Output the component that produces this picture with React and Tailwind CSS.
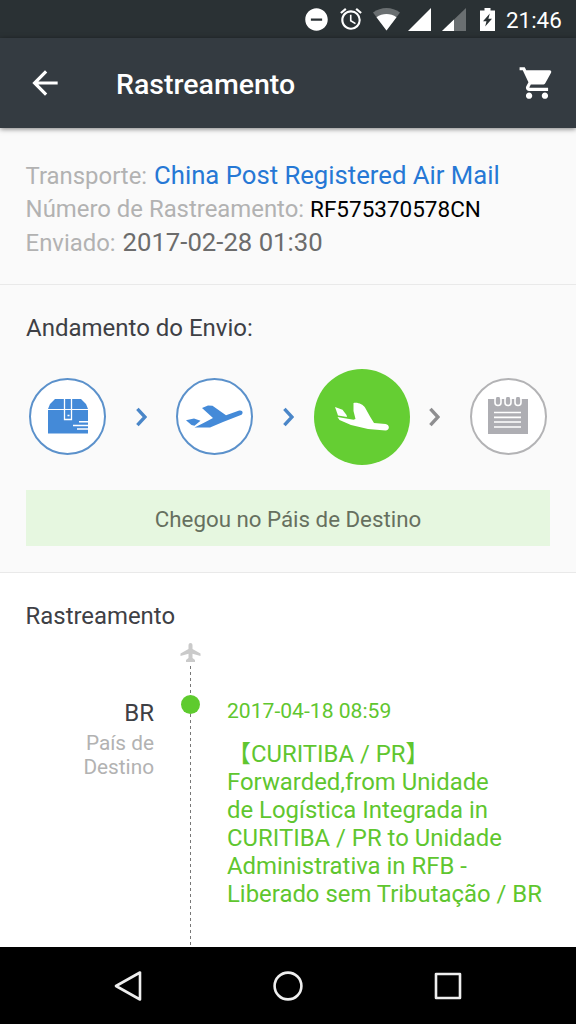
import React from 'react';
import { MdAlarm, MdArrowBack, MdDoNotDisturbOn, MdShoppingCart } from 'react-icons/md';

function StatusBar() {
  return (
    <div className="flex h-[38px] shrink-0 items-center bg-[#2a3134] pl-[303px] text-white">
      <MdDoNotDisturbOn className="h-[27px] w-[27px] shrink-0" />
      <MdAlarm className="ml-2 h-[26px] w-[26px] shrink-0" />
      <svg className="ml-[9px] h-[23px] w-[27px] shrink-0" viewBox="0 0 27 23">
        <path d="M0 4.5C8-1.5 19-1.5 27 4.5L13.5 22.5z" fill="#6a6f71" />
        <path d="M3.5 9.3C9.5 5 17.5 5 23.5 9.3L13.5 22.5z" fill="#fff" />
      </svg>
      <svg className="ml-[8px] h-[23px] w-[23px] shrink-0" viewBox="0 0 23 23">
        <path d="M0 23L23 0v23z" fill="#fff" />
      </svg>
      <svg className="ml-[11px] h-[23px] w-[24px] shrink-0" viewBox="0 0 24 23">
        <path d="M0 23L24 0v23z" fill="#6a6f71" />
        <path d="M0 23L12 11.5V23z" fill="#fff" />
      </svg>
      <svg className="ml-[14px] h-[23px] w-[15px] shrink-0" viewBox="0 0 15 23">
        <path d="M4.5 0h6v2.5H15V23H0V2.5h4.5z" fill="#fff" />
        <path d="M9.8 5.5L3 13.2h3.5L5.2 18.5l6.8-7.7H8.4z" fill="#2a3134" />
      </svg>
      <span className="ml-[11px] mt-0.5 text-[22.4px] leading-none">21:46</span>
    </div>
  );
}

function AppBar() {
  return (
    <header className="relative flex h-[90px] shrink-0 items-center bg-[#343b41] pl-[26px] pr-[20px] text-white shadow-[0_1px_5px_rgba(0,0,0,0.5)]">
      <MdArrowBack className="h-[38px] w-[38px]" />
      <h1 className="ml-[52px] mt-1 flex-1 text-[28.5px] font-medium leading-none">Rastreamento</h1>
      <MdShoppingCart className="h-[38px] w-[38px]" />
    </header>
  );
}

function Chevron({ className }) {
  return (
    <svg className={`h-5 w-[11px] shrink-0 ${className}`} viewBox="0 0 11 20" fill="none" stroke="currentColor" strokeWidth="3.4">
      <path d="M1.4 1.8L9 10l-7.6 8.2" />
    </svg>
  );
}

function BoxIcon() {
  return (
    <svg className="h-[35px] w-[40px]" viewBox="0 0 40 35">
      <path d="M7 0h26l5 5 2 5H0l2-5zM0 11h40v23.5H0z" fill="#448ad8" />
      <path d="M16.5 0v20.5h7V0" fill="none" stroke="#fff" strokeWidth="1.3" />
      <path d="M19.5 16.5h2M31 22.8h9M25 26.5h15M29 30h11" fill="none" stroke="#fff" strokeWidth="1.4" />
    </svg>
  );
}

function TakeoffIcon() {
  return (
    <svg className="h-[24px] w-[58px]" viewBox="0 0 58 24" fill="#448ad8">
      <path d="M0 15.2l8-1.7 6.5 2.2-6 5-3-.7z" />
      <path d="M16 3l6-2.5 4.5.3L40 10.3l12.5-4.5c4.5-1.3 5 2.5 3 4L37 17l-13 5.5H8.5l9-4.5 9.5-5z" />
    </svg>
  );
}

function LandingIcon() {
  return (
    <svg className="h-[30px] w-[56px]" viewBox="0 0 56 30" fill="#fff">
      <path d="M1 5l7.500 2.800 4 5.200.5 2L4 13.500z" />
      <path d="M19.500 1c4.500-1 9.500 1.500 11.500 4.500l5 9 4 6.500 11.500 1c4.500.8 4.500 6.200 0 6.500L34 27l-17-4-11.500-5-2-3 16 2.800 2-.8-2-8z" />
    </svg>
  );
}

function NotepadIcon() {
  return (
    <svg className="-mt-[3px] h-[38px] w-[40px]" viewBox="0 0 40 38">
      <path d="M0 3h40v35H0z" fill="#aeaeb3" />
      <path d="M6 16.5h27M6 21.3h27M6 26h27M6 31h27" stroke="#fff" strokeWidth="1.7" />
      <g fill="#aeaeb3" stroke="#fff" strokeWidth="1.6">
        <rect x="7" y=".5" width="6" height="9" rx="3" />
        <rect x="17" y=".5" width="6" height="9" rx="3" />
        <rect x="27" y=".5" width="6" height="9" rx="3" />
      </g>
      <path d="M10 1v6M20 1v6M30 1v6" stroke="#aeaeb3" strokeWidth="3" />
    </svg>
  );
}

function Step({ className, children }) {
  return (
    <div className={`-mt-px flex h-[77px] w-[77px] shrink-0 items-center justify-center rounded-full border-2 bg-white ${className}`}>
      {children}
    </div>
  );
}

function ShippingInfo() {
  return (
    <section className="h-[157px] shrink-0 whitespace-nowrap border-b border-[#e9e9e9] pl-[25.6px] pt-[30.6px] text-[23.9px] leading-[33.4px] text-[#b2b2b2]">
      <p>
        Transporte: <span className="ml-px text-[25.7px] text-[#2678d5]">China Post Registered Air Mail</span>
      </p>
      <p>
        Número de Rastreamento: <span className="text-[22.5px] text-black">RF575370578CN</span>
      </p>
      <p>
        Enviado: <span className="ml-px text-[25.7px] text-[#6c6c6c]">2017-02-28 01:30</span>
      </p>
    </section>
  );
}

function Progress() {
  return (
    <section className="h-[288px] shrink-0 border-b border-[#e9e9e9] px-[26px] pt-[29px]">
      <h2 className="text-[24px] leading-[28px] text-[#3e4045]">Andamento do Envio:</h2>
      <div className="mt-[27px] flex h-[96px] items-center justify-between px-[3px]">
        <Step className="border-[#5b91cb]"><BoxIcon /></Step>
        <Chevron className="text-[#4a86c8]" />
        <Step className="border-[#5b91cb]"><TakeoffIcon /></Step>
        <Chevron className="text-[#4a86c8]" />
        <div className="-mx-[10px] flex h-[96px] w-[96px] shrink-0 items-center justify-center rounded-full bg-[#65ce33]">
          <LandingIcon />
        </div>
        <Chevron className="text-[#8e8e90]" />
        <Step className="border-[#b3b3b5]"><NotepadIcon /></Step>
      </div>
      <div className="mt-[25px] flex h-[56px] items-center justify-center bg-[#e6f7e0] pt-[3px] text-[22.3px] text-[#66705f]">
        Chegou no Páis de Destino
      </div>
    </section>
  );
}

const dashes = 'w-px bg-[repeating-linear-gradient(to_bottom,#777_0_3px,transparent_3px_6px)]';

function Timeline() {
  return (
    <section className="flex min-h-0 flex-1 flex-col bg-white pt-[29px]">
      <h2 className="pl-[25.6px] text-[23.9px] leading-[28px] text-[#3e4045]">Rastreamento</h2>
      <div className="flex min-h-0 flex-1 pt-[12px]">
        <div className="w-[154px] pt-[57px] text-right">
          <p className="text-[24px] leading-[28px] text-[#3e4045]">BR</p>
          <p className="mt-[4px] text-[20.8px] leading-[24px] text-[#b2b2b2]">País de<br />Destino</p>
        </div>
        <div className="ml-[25px] flex w-[23px] shrink-0 flex-col items-center">
          <svg className="mt-[1px] h-[19px] w-[21px] shrink-0" viewBox="0 0 20 19" fill="#cacaca">
            <path d="M8 2.5c0-3.2 4-3.2 4 0V6l8 4.5V13l-8-2.2V15l2.5 2v2h-9v-2L8 15v-4.200L0 13v-2.5L8 6z" />
          </svg>
          <div className={`mt-[4px] h-[29px] shrink-0 ${dashes}`} />
          <div className="h-[19px] w-[19px] shrink-0 rounded-full bg-[#5ecb2e]" />
          <div className={`flex-1 ${dashes}`} />
        </div>
        <div className="ml-[25px] whitespace-nowrap pt-[55px] text-[#5fc62f]">
          <p className="text-[21.1px] leading-[28px]">2017-04-18 08:59</p>
          <p className="mt-[15px] text-[23.9px] leading-[28px]">
            【CURITIBA / PR】<br />
            Forwarded,from Unidade<br />
            de Logística Integrada in<br />
            CURITIBA / PR to Unidade<br />
            Administrativa in RFB -<br />
            Liberado sem Tributação / BR
          </p>
        </div>
      </div>
    </section>
  );
}

function NavBar() {
  return (
    <nav className="flex h-[77px] shrink-0 items-center justify-between bg-black px-[114px]">
      <svg className="h-[30px] w-[28px]" viewBox="0 0 28 30" fill="none" stroke="#eee" strokeWidth="2.6" strokeLinejoin="round">
        <path d="M26 1.5v27L2 15z" />
      </svg>
      <svg className="h-[30px] w-[30px]" viewBox="0 0 30 30" fill="none" stroke="#eee" strokeWidth="2.6">
        <circle cx="15" cy="15" r="13.4" />
      </svg>
      <svg className="h-[28px] w-[28px]" viewBox="0 0 28 28" fill="none" stroke="#eee" strokeWidth="2.6" strokeLinejoin="round">
        <path d="M2 2h24v24H2z" />
      </svg>
    </nav>
  );
}

export default function App() {
  return (
    <div className="flex h-[1024px] w-[576px] flex-col overflow-hidden bg-[#fafafa] font-['Roboto','Noto_Sans_CJK_SC',sans-serif]">
      <StatusBar />
      <AppBar />
      <ShippingInfo />
      <Progress />
      <Timeline />
      <NavBar />
    </div>
  );
}
